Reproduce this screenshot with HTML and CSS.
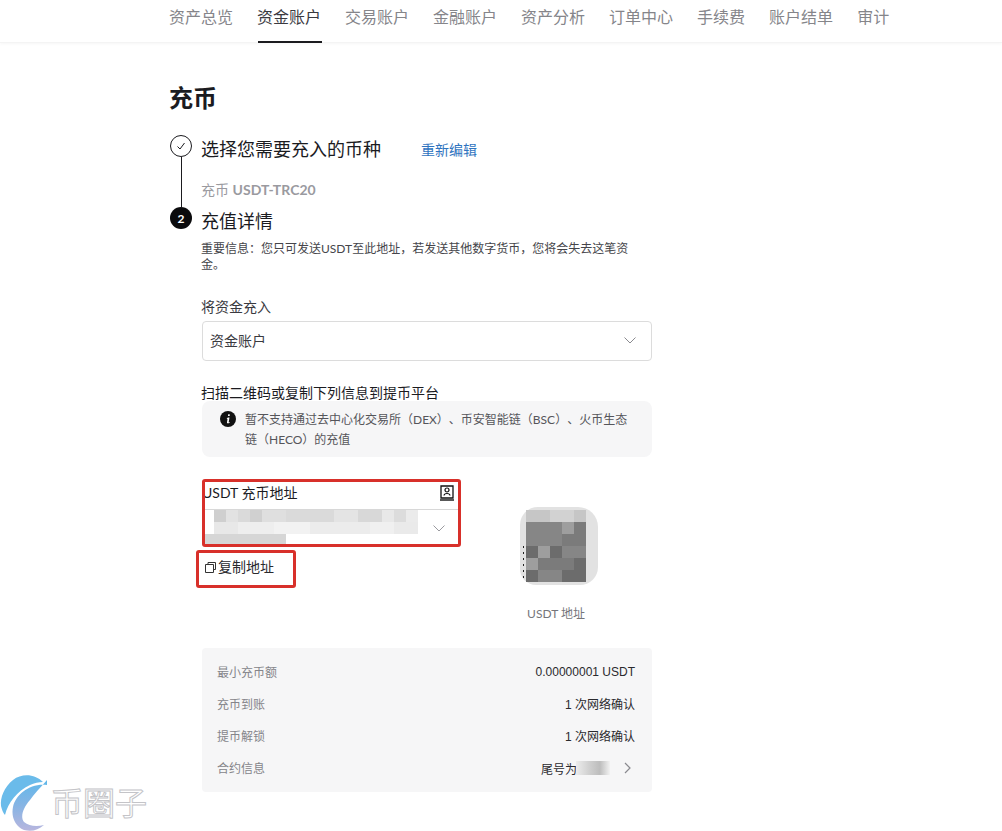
FILE: index.html
```html
<!DOCTYPE html>
<html lang="zh-CN">
<head>
<meta charset="utf-8">
<title>充币</title>
<link rel="stylesheet" href="styles.css">
</head>
<body>
<nav class="tabs">
  <a class="tab">资产总览</a>
  <a class="tab active">资金账户</a>
  <a class="tab">交易账户</a>
  <a class="tab">金融账户</a>
  <a class="tab">资产分析</a>
  <a class="tab">订单中心</a>
  <a class="tab">手续费</a>
  <a class="tab">账户结单</a>
  <a class="tab">审计</a>
</nav>
<main class="main">
  <h1 class="title">充币</h1>
  <section class="step step-done">
    <div class="marker">
      <span class="circle circle-outline">
        <svg width="12" height="12" viewBox="0 0 12 12"><path d="M2.500 6.500 5 9l4.500-6" fill="none" stroke="#1b1b1f" stroke-width="1"/></svg>
      </span>
      <span class="rail"></span>
    </div>
    <div class="step-body">
      <div class="step-head">
        <h2 class="step-title">选择您需要充入的币种</h2>
        <a class="edit">重新编辑</a>
      </div>
      <p class="picked"><span>充币</span> <b>USDT-TRC20</b></p>
    </div>
  </section>
  <section class="step">
    <div class="marker"><span class="circle circle-solid">2</span></div>
    <div class="step-body">
      <h2 class="step-title">充值详情</h2>
      <p class="warning">重要信息：您只可发送USDT至此地址，若发送其他数字货币，您将会失去这笔资金。</p>
      <label class="field-label">将资金充入</label>
      <div class="select">
        <span>资金账户</span>
        <svg width="12" height="7" viewBox="0 0 12 7"><path d="M.5.5 6 6 11.500.5" fill="none" stroke="#8a8a8f"/></svg>
      </div>
      <p class="scan-label">扫描二维码或复制下列信息到提币平台</p>
      <div class="notice">
        <svg class="notice-icon" width="16" height="16" viewBox="0 0 16 16"><circle cx="8" cy="8" r="8" fill="#111"/><path d="M8.200 3.300h1.500v1.700H8zM7.800 6.500h1.700L8.700 11c-.1.500.2.500.9.100l.1.600c-1.300.9-2.900 1-2.700-.5l.5-3.200h-.9z" fill="#fff"/></svg>
        <p class="notice-text">暂不支持通过去中心化交易所（DEX）、币安智能链（BSC）、火币生态链（HECO）的充值</p>
      </div>
      <div class="address-area">
        <div class="address-col">
          <div class="address-box">
            <div class="address-head">
              <span>USDT 充币地址</span>
              <svg width="16" height="16" viewBox="0 0 16 16"><path d="M2 1h12v12H2z" fill="none" stroke="#111" stroke-width="1.300"/><path d="M1 15h14" fill="none" stroke="#111" stroke-width="1.400"/><circle cx="8" cy="5" r="2" fill="none" stroke="#111" stroke-width="1.200"/><path d="M5 10.500c.3-2.700 5.700-2.700 6 0" fill="none" stroke="#111" stroke-width="1.200"/></svg>
            </div>
            <div class="address-value">
              <div class="blur-lines">
                <span class="blur-line blur-long"></span>
                <span class="blur-line blur-long blur-pale"></span>
                <span class="blur-line blur-short"></span>
              </div>
              <svg width="12" height="7" viewBox="0 0 12 7"><path d="M.5.5 6 6 11.500.5" fill="none" stroke="#9a9a9f"/></svg>
            </div>
          </div>
          <div class="copy">
            <svg width="11" height="11" viewBox="0 0 11 11"><path d="M3 2.500V.5h7.500v7H8.500M.5 2.500h8v8h-8z" fill="none" stroke="#333"/></svg>
            <span>复制地址</span>
          </div>
        </div>
        <div class="qr-col">
          <div class="qr">
            <div class="qr-grid">
              <i class="q q1"></i><i class="q q1"></i><i class="q q0"></i><i class="q q0"></i><i class="q q1"></i>
              <i class="q q3"></i><i class="q q3"></i><i class="q q3"></i><i class="q q2"></i><i class="q q4"></i>
              <i class="q q3"></i><i class="q q3"></i><i class="q q3"></i><i class="q q4"></i><i class="q q4"></i>
              <i class="q q5"></i><i class="q q2"></i><i class="q q5"></i><i class="q q3"></i><i class="q q3"></i>
              <i class="q q2"></i><i class="q q4"></i><i class="q q4"></i><i class="q q4"></i><i class="q q5"></i>
              <i class="q q5"></i><i class="q q3"></i><i class="q q3"></i><i class="q q5"></i><i class="q q5"></i>
            </div>
          </div>
          <span class="qr-label">USDT 地址</span>
        </div>
      </div>
      <dl class="facts">
        <div class="fact"><dt>最小充币额</dt><dd>0.00000001 USDT</dd></div>
        <div class="fact"><dt>充币到账</dt><dd class="fact-cjk">1 次网络确认</dd></div>
        <div class="fact"><dt>提币解锁</dt><dd class="fact-cjk">1 次网络确认</dd></div>
        <div class="fact"><dt>合约信息</dt><dd class="contract"><span>尾号为</span><i class="mask"></i><svg width="7" height="12" viewBox="0 0 7 12"><path d="M1 1l5 5-5 5" fill="none" stroke="#8a8a8f" stroke-width="1.200"/></svg></dd></div>
      </dl>
    </div>
  </section>
</main>
<div class="red-box red-address"></div>
<div class="red-box red-copy"></div>
<div class="watermark">
  <svg width="52" height="61" viewBox="0 0 52 61">
    <defs><linearGradient id="sw" x1="0" y1="0" x2="0" y2="1"><stop offset="0" stop-color="#5fb8ea"/><stop offset=".5" stop-color="#86b4e4"/><stop offset="1" stop-color="#b8b6de"/></linearGradient></defs>
    <path d="M43 12C35 4 22 3 13 10 4 17 0 28 1 36c1 4 2 7 4 9C8 33 17 21 30 15c4-2 9-3 13-3Z" fill="#6abbea"/>
    <path d="M47 15C30 13 16 24 13 37c-2 10 2 19 11 23 8 2 14 0 20-5-8 2-15 1-20-3-4-5-1-14 6-22 4-6 10-12 17-20Z" fill="url(#sw)"/>
  </svg>
  <span class="wm-text">币圈子</span>
</div>
</body>
</html>
```
FILE: styles.css
```css
* { box-sizing: border-box; }
html, body { margin: 0; padding: 0; }
body {
  width: 1002px;
  height: 831px;
  overflow: hidden;
  background: #fff;
  color: #1b1b1f;
  font-family: "Lato", "Noto Sans CJK SC", sans-serif;
  text-spacing-trim: space-all;
  position: relative;
}
h1, h2, p, dl, dd { margin: 0; }
.tabs {
  height: 43px;
  padding-left: 170px;
  display: flex;
  gap: 24px;
  border-bottom: 1px solid #f4f4f4;
  box-shadow: 0 1px 3px rgba(0,0,0,.04);
}
.tab {
  height: 43px;
  padding-right: 1px;
  line-height: 34px;
  font-size: 16px;
  color: #85858a;
  text-indent: -1px;
}
.tab.active {
  color: #3a3a3f;
  border-bottom: 2px solid #1b1b1f;
}
.main { padding: 0 0 0 170px; }
.title {
  font-size: 24px;
  font-weight: 700;
  line-height: 32px;
  margin: 39px 0 21px -1px;
}
.step { display: flex; }
.marker {
  width: 22px;
  display: flex;
  flex-direction: column;
  align-items: center;
  flex: none;
}
.circle {
  width: 22px;
  height: 22px;
  border-radius: 50%;
  flex: none;
  display: flex;
  align-items: center;
  justify-content: center;
}
.circle-outline { border: 1px solid #1b1b1f; }
.circle-solid { background: #0b0b0d; color: #fff; font-size: 12px; font-weight: 700; }
.rail { width: 1px; height: 50px; background: #1b1b1f; }
.step-body { margin-left: 9px; width: 451px; }
.step-head { display: flex; align-items: center; gap: 40px; height: 28px; }
.step-title { font-size: 18px; font-weight: 400; line-height: 28px; white-space: nowrap; }
.edit { font-size: 14px; line-height: 20px; margin-top: 2px; color: #2f74c0; }
.picked { margin-top: 17px; font-size: 14px; line-height: 20px; color: #9a9a9f; }
.picked b { font-weight: 700; }
.warning { margin-top: 6px; width: 430px; font-size: 12px; line-height: 16px; color: #45454a; }
.field-label { display: block; margin-top: 24px; font-size: 14px; line-height: 20px; color: #3a3a3f; }
.select {
  margin: 4px 0 0 1px;
  width: 450px;
  height: 40px;
  border: 1px solid #dcdcdc;
  border-radius: 4px;
  padding: 0 15px 2px 7px;
  display: flex;
  align-items: center;
  justify-content: space-between;
  font-size: 14px;
  color: #3a3a3f;
}
.scan-label { margin-top: 22px; font-size: 14px; line-height: 20px; color: #1b1b1f; white-space: nowrap; }
.notice {
  margin: -2px 0 0 1px;
  width: 450px;
  height: 56px;
  background: #f6f6f7;
  border-radius: 8px;
  padding: 9px 20px 0 18px;
  display: flex;
  gap: 9px;
}
.notice-icon { flex: none; margin-top: 1px; }
.notice-text { font-size: 12px; line-height: 19.5px; color: #55555a; }
.address-area { display: flex; margin: 23px 0 0 1px; width: 450px; }
.address-col { width: 258px; flex: none; }
.address-box { height: 66px; }
.address-head {
  height: 30px;
  padding: 0 5px 4px 0;
  display: flex;
  justify-content: space-between;
  align-items: center;
  font-size: 14px;
  line-height: 20px;
  border-bottom: 1px solid #d8d8d8;
}
.address-value {
  height: 36px;
  display: flex;
  align-items: center;
  justify-content: space-between;
  padding: 0 15px 0 2px;
}
.blur-lines { display: flex; flex-direction: column; }
.blur-line { display: block; height: 12px; }
.blur-long {
  width: 204px;
  margin-left: 10px;
  background: linear-gradient(90deg,
    #cfcfcf 0 12px, #e2e2e2 12px 24px, #dadada 24px 36px, #d0d0d0 36px 48px,
    #dfdfdf 48px 72px, #dadada 72px 120px, #e4e4e4 120px 144px, #d8d8d8 144px 168px,
    #e8e8e8 168px 180px, #dcdcdc 180px 192px, #ebebeb 192px 204px);
}
.blur-pale {
  background: linear-gradient(90deg,
    #e8e8e8 0 24px, #eeeeee 24px 60px, #f2f2f2 60px 96px, #ececec 96px 156px,
    #f0f0f0 156px 180px, #eaeaea 180px 204px);
}
.blur-short { width: 82px; background: #d6d6d6; }
.copy {
  margin: 9px 0 0 3px;
  display: flex;
  align-items: center;
  gap: 2px;
  font-size: 14px;
  line-height: 24px;
  color: #2a2a2e;
}
.qr-col {
  flex: none;
  width: 108px;
  margin-left: 42px;
  display: flex;
  flex-direction: column;
  align-items: center;
  padding-top: 27px;
}
.qr {
  width: 78px;
  height: 78px;
  margin-left: 6px;
  padding: 3px 12px 0 6px;
  background: #e2e2e2;
  border-radius: 18px 20px 18px 16px;
}
.qr-grid {
  display: grid;
  grid-template-columns: repeat(5, 12px);
  grid-template-rows: repeat(6, 12px);
  position: relative;
}
.qr-grid::before {
  content: "";
  position: absolute;
  left: -3px;
  top: 36px;
  bottom: 0;
  width: 1px;
  background: repeating-linear-gradient(#222 0 2px, transparent 2px 6px);
}
.q { display: block; }
.q0 { background: #d2d2d2; }
.q1 { background: #c6c6c6; }
.q2 { background: #9e9e9e; }
.q3 { background: #868686; }
.q4 { background: #7b7b7b; }
.q5 { background: #6c6c6c; }
.qr-label { margin-top: 20px; font-size: 12px; line-height: 18px; color: #75757a; white-space: nowrap; }
.facts {
  margin: 25px 0 0 1px;
  width: 450px;
  height: 144px;
  padding: 8px 17px 8px 15px;
  background: #f6f6f7;
  border-radius: 4px;
}
.fact {
  height: 32px;
  display: flex;
  align-items: center;
  justify-content: space-between;
  font-size: 12px;
}
.fact dt { color: #85858a; padding-bottom: 2px; }
.fact dd { color: #2a2a2e; font-family: "Liberation Sans", "Noto Sans CJK SC", sans-serif; }
.fact .fact-cjk { padding-bottom: 2px; }
.contract { display: flex; align-items: center; }
.contract svg { margin-right: 4px; }
.mask {
  display: block;
  width: 34px;
  height: 14px;
  margin: 0 14px 0 -1px;
  background: linear-gradient(90deg,#ececec,#cfcfcf 40%,#bdbdbd 70%,#f2f2f2);
}
.red-box {
  position: absolute;
  border: 3px solid #d8302a;
  border-radius: 3px;
}
.red-address { left: 202px; top: 479px; width: 259px; height: 68px; }
.red-copy { left: 196px; top: 550px; width: 100px; height: 38px; }
.watermark {
  position: absolute;
  left: 0;
  top: 770px;
  display: flex;
  align-items: center;
}
.wm-text {
  margin: 0 0 0 -1px;
  font-size: 32px;
  line-height: 40px;
  color: #fff;
  -webkit-text-stroke: 1px #c4c4c8;
  font-family: "Noto Sans CJK SC", sans-serif;
}
```
